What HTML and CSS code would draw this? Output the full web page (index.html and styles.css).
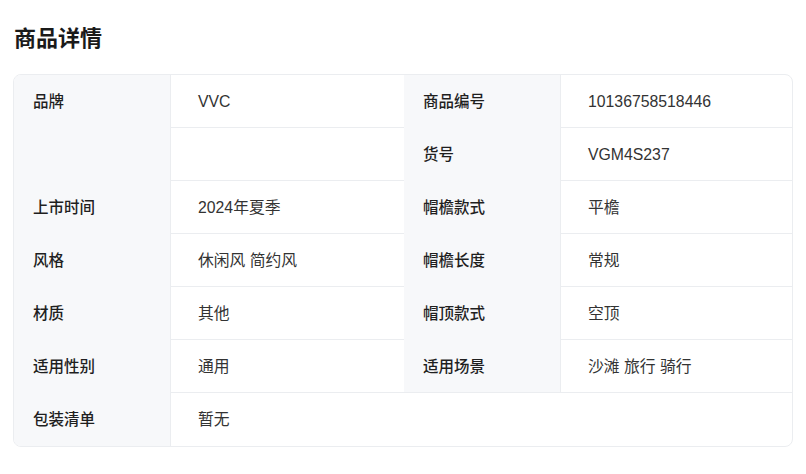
FILE: index.html
```html
<!DOCTYPE html>
<html lang="zh-CN">
<head>
    <meta charset="UTF-8">
    <meta name="viewport" content="width=device-width, initial-scale=1.0">
    <title>商品详情</title>
    <link rel="stylesheet" href="styles.css">
</head>
<body>
    <main class="detail">
        <h2 class="detail-title">商品详情</h2>

        <section class="spec-table">
            <div class="spec-label span-2">品牌</div>
            <div class="spec-value">VVC</div>
            <div class="spec-label">商品编号</div>
            <div class="spec-value">10136758518446</div>

            <div class="spec-value"></div>
            <div class="spec-label">货号</div>
            <div class="spec-value">VGM4S237</div>

            <div class="spec-label">上市时间</div>
            <div class="spec-value">2024年夏季</div>
            <div class="spec-label">帽檐款式</div>
            <div class="spec-value">平檐</div>

            <div class="spec-label">风格</div>
            <div class="spec-value">休闲风 简约风</div>
            <div class="spec-label">帽檐长度</div>
            <div class="spec-value">常规</div>

            <div class="spec-label">材质</div>
            <div class="spec-value">其他</div>
            <div class="spec-label">帽顶款式</div>
            <div class="spec-value">空顶</div>

            <div class="spec-label">适用性别</div>
            <div class="spec-value">通用</div>
            <div class="spec-label with-line">适用场景</div>
            <div class="spec-value">沙滩 旅行 骑行</div>

            <div class="spec-label">包装清单</div>
            <div class="spec-value wide last">暂无</div>
        </section>
    </main>
</body>
</html>
```

FILE: styles.css
```css
body {
    margin: 0;
    padding: 0 13px;
    background-color: #fff;
    font-family: "Liberation Sans", "Noto Sans CJK SC", sans-serif;
    color: #333;
}

.detail-title {
    margin: 21px 0 23px 1px;
    font-family: "Noto Sans CJK SC", sans-serif;
    font-size: 22px;
    line-height: 30px;
    font-weight: 600;
    color: #1a1a1a;
}

.spec-table {
    display: grid;
    grid-template-columns: 157px 233px 157px 1fr;
    grid-auto-rows: 53px;
    border: 1px solid #ebedf0;
    border-radius: 8px;
    overflow: hidden;
}

.spec-label,
.spec-value {
    line-height: 20px;
    box-sizing: border-box;
}

/* labels use the CJK font, values the Arial-like one: baselines differ a bit */
.spec-label {
    padding: 15px 0 0 19px;
    background-color: #f7f8fa;
    border-right: 1px solid #ebedf0;
    font-family: "Noto Sans CJK SC", sans-serif;
    font-size: 15.5px;
    font-weight: 500;
    color: #1f1f1f;
}

.spec-label.span-2 {
    grid-row: span 2;
}

.spec-label.with-line {
    border-bottom: 1px solid #ebedf0;
}

.spec-value {
    padding: 17px 0 0 27px;
    border-bottom: 1px solid #ebedf0;
    font-size: 15.8px;
}

.spec-value.wide {
    grid-column: span 3;
}

.spec-value.last {
    border-bottom: none;
}
```
